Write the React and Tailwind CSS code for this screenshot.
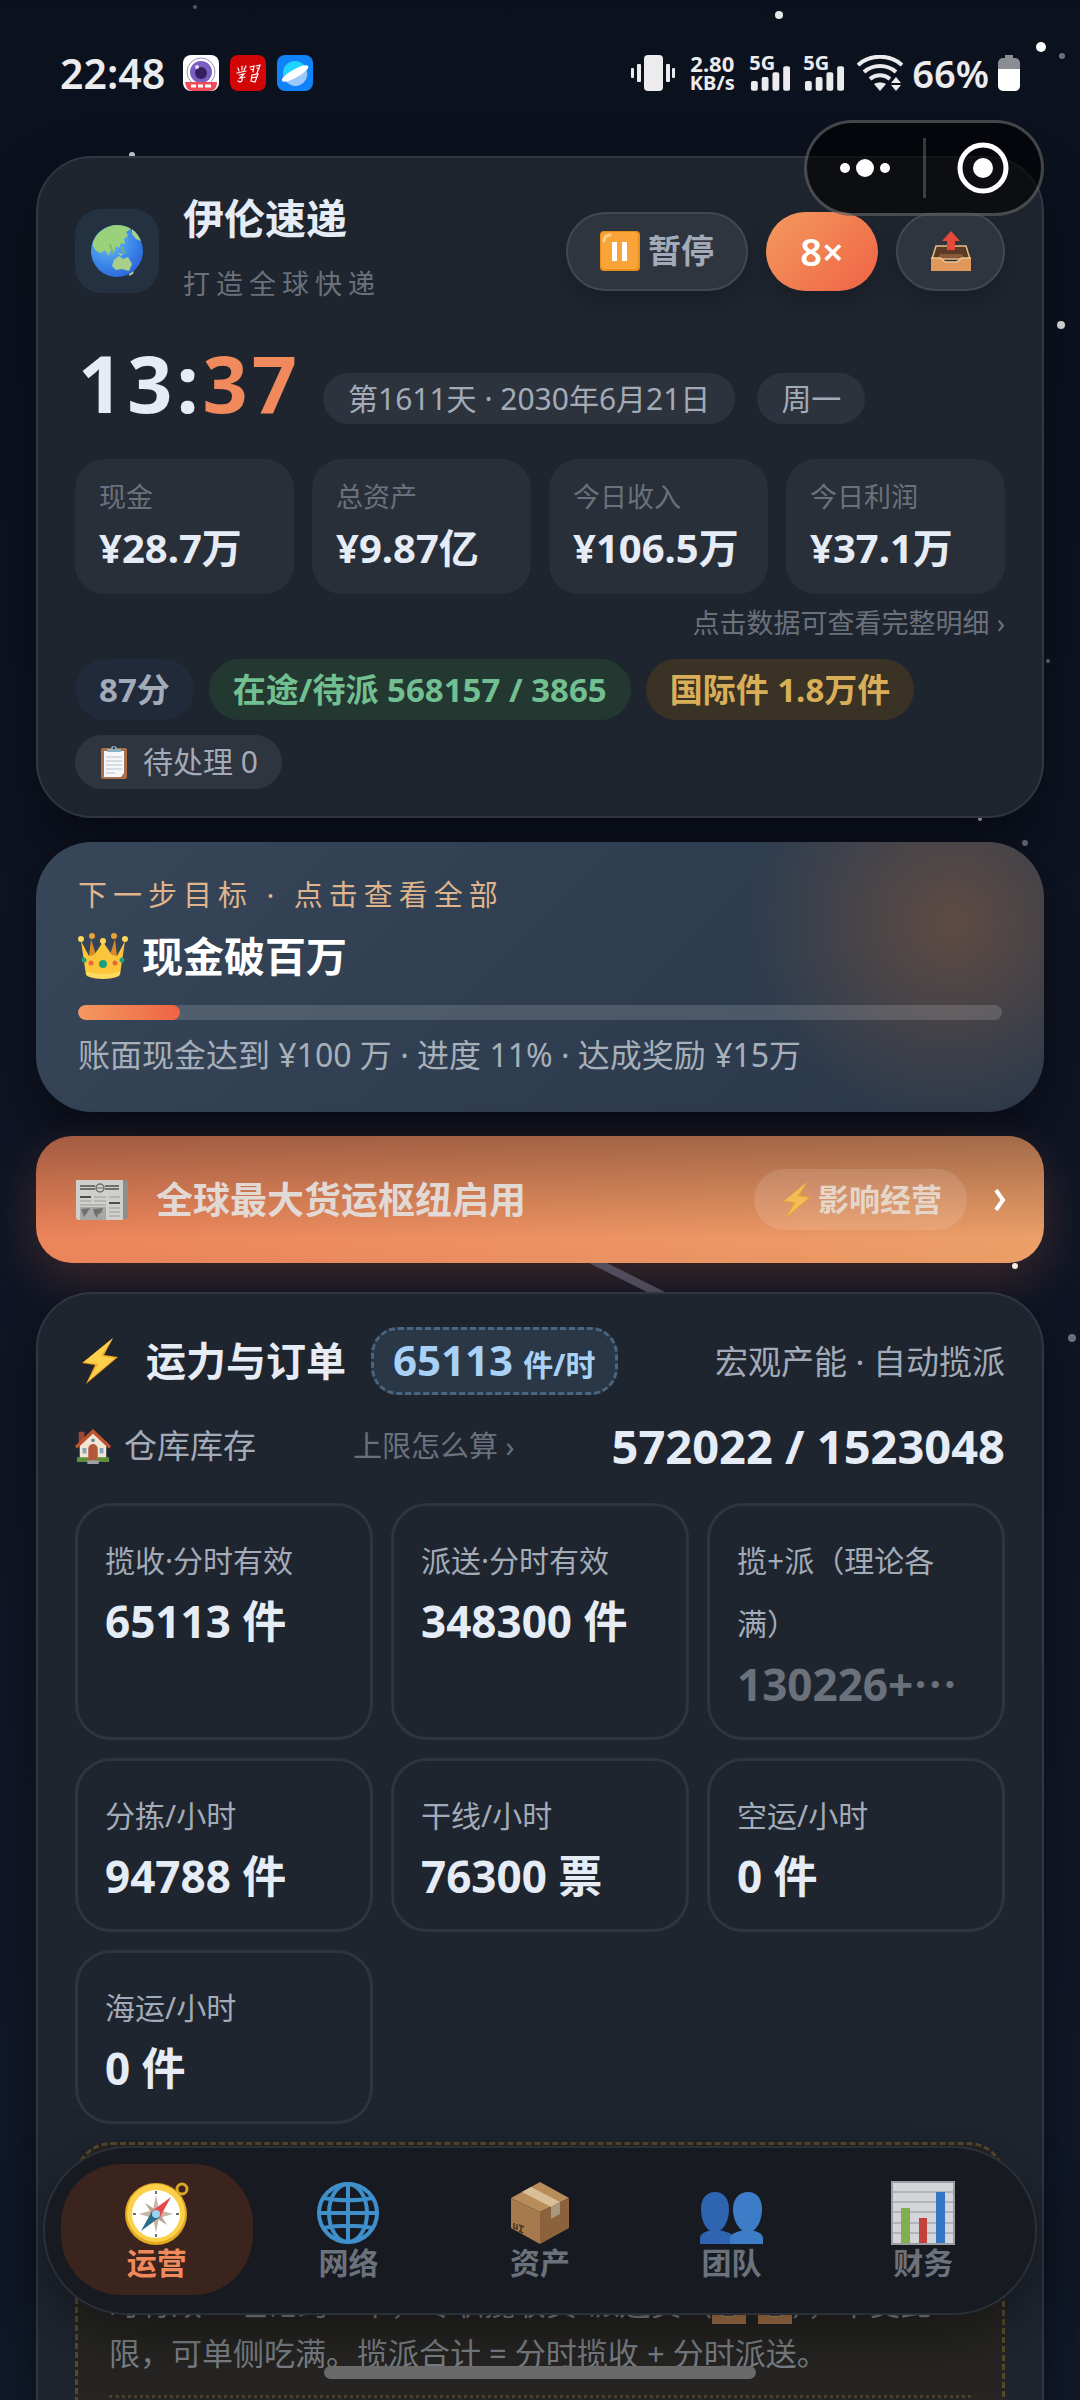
import { useState } from 'react';

const STARS = [
  [779, 15, 4, 0.9],
  [1041, 47, 5, 1],
  [1062, 56, 3, 0.4],
  [195, 7, 2, 0.3],
  [132, 155, 3, 0.8],
  [1061, 325, 4, 0.9],
  [1048, 661, 2, 0.4],
  [1025, 843, 3, 0.4],
  [980, 819, 2, 0.8],
  [1015, 1266, 3, 1],
  [1072, 1338, 4, 0.4],
];

const STATS = [
  { label: '现金', value: '¥28.7万' },
  { label: '总资产', value: '¥9.87亿' },
  { label: '今日收入', value: '¥106.5万' },
  { label: '今日利润', value: '¥37.1万' },
];

const CAPACITY = [
  { label: '揽收·分时有效', value: '65113 件' },
  { label: '派送·分时有效', value: '348300 件' },
  { label: '揽+派（理论各满）', value: '130226+⋯', muted: true },
  { label: '分拣/小时', value: '94788 件' },
  { label: '干线/小时', value: '76300 票' },
  { label: '空运/小时', value: '0 件' },
  { label: '海运/小时', value: '0 件' },
];

const EarthIcon = () => (
  <svg viewBox="0 0 54 54" className="size-[54px]">
    <defs>
      <radialGradient id="sea" cx="0.35" cy="0.3" r="0.8">
        <stop offset="0" stopColor="#6fc0f2" />
        <stop offset="0.6" stopColor="#3b86e8" />
        <stop offset="1" stopColor="#2a5fd8" />
      </radialGradient>
    </defs>
    <circle cx="27" cy="27" r="26" fill="url(#sea)" />
    <path
      d="M3 18C7 8 16 2 26 1c6 0 11 1 15 4l-5 3 2 4-4 3 1 5-4-1-2 5-3-2-2 6-4-1-1 5-4-6-4 3-5-2-3-5z"
      fill="#9bd17a"
    />
    <path d="M42 5c4 3 7 7 9 12l-5-2-4-5zM24 36l5-4 4 3 5-2 4 7-3 7-7-2-6 1-4-4zM39 50l5-3-1 3-4 2zM28 29l5 1-2 2z" fill="#a9d08a" />
    <path d="M20 21l3 8M32 24l2 5" stroke="#79b86b" strokeWidth="2" strokeLinecap="round" />
  </svg>
);

const PauseIcon = () => (
  <svg viewBox="0 0 40 40" className="size-10">
    <rect x="0" y="0" width="40" height="40" rx="4" fill="#e58f1d" />
    <rect x="1" y="1" width="37" height="37" rx="4" fill="#f9a338" />
    <path d="M4 10a6 6 0 0 1 6-6" stroke="#ffd08a" strokeWidth="3" fill="none" strokeLinecap="round" />
    <rect x="12" y="11" width="5" height="19" fill="#fff" />
    <rect x="22" y="11" width="5" height="19" fill="#fff" />
  </svg>
);

const TrayIcon = ({ className, down }) => (
  <svg viewBox="0 0 40 40" className={className}>
    <path d="M5 15h30l4 13H1z" fill="#5c3a25" stroke="#e8bd83" strokeWidth="1.5" />
    <path d="M9 23h22l2 4H7z" fill="#8a5a38" />
    <path d="M0 27h9c2 0 3 4 6 4h10c3 0 4-4 6-4h9v13H0z" fill="#e0985c" />
    <path d="M0 27h9c2 0 3 4 6 4h10c3 0 4-4 6-4h9" fill="none" stroke="#f0c48c" strokeWidth="1.5" />
    <path d={down ? 'M16 0h8v9h5l-9 10-9-10h5z' : 'M20 0l9 10h-5v9h-8v-9h-5z'} fill="#e5493a" />
  </svg>
);

const ClipboardIcon = () => (
  <svg viewBox="0 0 30 36" className="h-9 w-[30px]">
    <rect x="2" y="4" width="26" height="31" rx="2" fill="#a9704a" />
    <path d="M5 7h20v22l-3 4H5z" fill="#f5f7fa" />
    <path d="M7 13h16M7 17h16M7 21h16M7 25h16M7 29h9" stroke="#b9c3cf" strokeWidth="1" />
    <path d="M8 8V5h4a3 3 0 0 1 6 0h4v3z" fill="#8fb3c6" />
    <circle cx="15" cy="4" r="1.3" fill="#34424e" />
  </svg>
);

const CrownIcon = () => (
  <svg viewBox="0 0 50 46" className="h-[46px] w-[50px]">
    <path d="M13 6l5 16 7-14 7 14 5-16 3 26H10z" fill="#d98b2b" />
    <path d="M3 8l8 15 5-1 9-13 9 13 5 1 8-15-5 34c-8 4-26 4-34 0z" fill="#fbc63b" />
    <path d="M8 38c9 4 25 4 34 0l-1 5c-8 4-24 4-32 0z" fill="#fdd95c" />
    <g fill="#fdd65a">
      <circle cx="3" cy="6" r="3" />
      <circle cx="47" cy="6" r="3" />
      <circle cx="25" cy="8" r="3" />
      <circle cx="14" cy="3" r="3" fill="#e9a23a" />
      <circle cx="36" cy="3" r="3" fill="#e9a23a" />
    </g>
    <circle cx="25" cy="31" r="4" fill="#1f9e7c" />
    <circle cx="13" cy="30" r="2.5" fill="#e5683a" />
    <circle cx="37" cy="30" r="2.5" fill="#e5683a" />
    <circle cx="6" cy="27" r="2.5" fill="#1f9e7c" />
    <circle cx="44" cy="27" r="2.5" fill="#1f9e7c" />
  </svg>
);

const NewsIcon = () => (
  <svg viewBox="0 0 52 42" className="h-[42px] w-[52px]">
    <rect x="4" y="1" width="48" height="39" rx="3" fill="#8d8d8b" />
    <path d="M0 1h47v40H3c-2 0-3-1-3-3z" fill="#cfcfcc" />
    <path d="M4 7h15M29 7h14M4 10h15M29 10h14" stroke="#6f706f" strokeWidth="2" />
    <circle cx="24" cy="9" r="4" fill="none" stroke="#6f706f" strokeWidth="1.5" />
    <path d="M20 9h8" stroke="#6f706f" />
    <path d="M4 18h11M33 24h11" stroke="#4d4d4c" strokeWidth="2" />
    <path d="M4 22h11M18 18h12M18 22h12M33 18h11M4 26h26M33 29h11M33 33h11M33 37h11" stroke="#9b9b99" />
    <rect x="4" y="28" width="26" height="13" fill="#a7a7a5" />
    <path d="M5 30l9-1-3 5-3 4zM17 30l10-1-2 5-3 1-1 4-3-5z" fill="#6f706f" />
  </svg>
);

const BoltIcon = ({ className }) => (
  <svg viewBox="0 0 36 46" className={className}>
    <path d="M31 0L0 25l13 2L4 46l32-27-14-2z" fill="#f5a623" />
    <path d="M31 0L2 24l14 2L6 43l27-23-14-2z" fill="#fdd14b" />
  </svg>
);

const HouseIcon = () => (
  <svg viewBox="0 0 38 38" className="size-9">
    <rect x="4" y="4" width="6" height="12" fill="#9c4a36" />
    <path d="M5 18L19 5l14 13v15H5z" fill="#f2e6d4" />
    <path d="M19 1L0 19l2 3L19 6l17 16 2-3z" fill="#c0532f" />
    <path d="M2 31h12v5H2zM24 31h12v5H24z" fill="#5e8f3c" />
    <path d="M14 36V22a5 5 0 0 1 10 0v14z" fill="#b5573a" />
    <circle cx="19" cy="13" r="2" fill="#6f8ba0" />
    <path d="M8 21h4v6H8zM26 21h4v6h-4z" fill="#7fa6bd" />
    <path d="M13 34h12v4H13z" fill="#9aa2a8" />
  </svg>
);

const CompassIcon = () => (
  <svg viewBox="0 0 64 64" className="size-16">
    <circle cx="57" cy="8" r="5" fill="none" stroke="#d9a726" strokeWidth="3" />
    <circle cx="31" cy="33" r="31" fill="#e3a91f" />
    <circle cx="31" cy="32" r="29" fill="#fbd04a" />
    <circle cx="31" cy="33" r="24" fill="#fff" />
    <path d="M31 14l3 15 14 4-14 4-3 15-3-15-14-4 14-4z" fill="#c9b5a6" />
    <path d="M20 22l11 7 11-7-7 11 7 11-11-7-11 7 7-11z" fill="#b8a396" />
    <path d="M46 16L27 30l8 6z" fill="#e5484a" />
    <path d="M16 50l11-20 8 6z" fill="#2c6c8a" />
    <circle cx="31" cy="33" r="4" fill="#9bd3ee" />
    <path d="M31 10v3M31 53v3M8 33h3M51 33h3" stroke="#6f6f6f" strokeWidth="2" />
  </svg>
);

const GlobeIcon = () => (
  <svg viewBox="0 0 64 64" className="size-16" fill="none" stroke="#3f8fcb" strokeWidth="4">
    <circle cx="32" cy="32" r="29" />
    <ellipse cx="32" cy="32" rx="19" ry="29" />
    <path d="M32 3v58M3 32h58M8 17c14 3 34 3 48 0M8 47c14-3 34-3 48 0" />
  </svg>
);

const PackageIcon = () => (
  <svg viewBox="0 0 64 64" className="size-16">
    <path d="M32 1l29 16-29 14L3 17z" fill="#b98c5c" />
    <path d="M3 17l29 14v32L3 47z" fill="#a67a4c" />
    <path d="M61 17L32 31v32l29-16z" fill="#8b623b" />
    <path d="M23 6l29 15-9 5L14 11z" fill="#d8bf98" />
    <path d="M43 26l9-5v12l-9 5z" fill="#a8967e" />
    <path d="M6 42v5l3 1v-5M11 50l4 2M13 45v6M11 44l5 2" stroke="#4a3421" strokeWidth="1.5" fill="none" />
  </svg>
);

const TeamIcon = () => (
  <svg viewBox="0 0 64 64" className="size-16">
    <path d="M15 11c9 0 14 7 14 17 0 11-5 23-14 23S1 39 1 28c0-10 5-17 14-17zM0 63v-6c0-5 8-8 15-8s19 3 19 8v6z" fill="#2f64b0" />
    <path d="M48 11c9 0 14 7 14 17 0 11-5 23-14 23S33 39 33 28c0-10 6-17 15-17zM30 63v-6c0-5 11-8 18-8s15 3 15 8v6z" fill="#3d7dc8" />
  </svg>
);

const ChartIcon = () => (
  <svg viewBox="0 0 64 64" className="size-16">
    <rect x="1" y="1" width="62" height="62" fill="#d3d5d8" stroke="#9a9da2" strokeWidth="2" />
    <path d="M2 11h60M2 21h60M2 31h60M2 42h60M2 52h60" stroke="#a6a9ae" strokeWidth="1.5" />
    <rect x="10" y="27" width="9" height="35" fill="#83ae50" />
    <rect x="28" y="37" width="8" height="25" fill="#c4423c" />
    <rect x="45" y="11" width="9" height="51" fill="#3576c4" />
  </svg>
);

const TABS = [
  { name: '运营', Icon: CompassIcon },
  { name: '网络', Icon: GlobeIcon },
  { name: '资产', Icon: PackageIcon },
  { name: '团队', Icon: TeamIcon },
  { name: '财务', Icon: ChartIcon },
];

const Signal = () => (
  <div className="flex h-9 w-[42px] flex-col justify-between">
    <span className="text-[20px] leading-4 font-bold">5G</span>
    <svg viewBox="0 0 43 25" className="-mt-2 h-[25px] w-[42px]" fill="#ececee">
      <rect x="2" y="15" width="7" height="10" rx="2" />
      <rect x="13" y="11" width="7" height="14" rx="2" />
      <rect x="24" y="6" width="7" height="19" rx="2" />
      <rect x="35" y="0" width="7" height="25" rx="2" />
    </svg>
  </div>
);

const StatusBar = () => (
  <header className="flex h-[156px] items-start justify-between px-6 pt-[49px] text-[#ececee]">
    <div className="flex h-12 items-center gap-[11px]">
      <span className="mr-[7px] text-[41px] leading-none font-semibold">22:48</span>
      <svg viewBox="0 0 36 36" className="size-9">
        <rect width="36" height="36" rx="8" fill="#fff" />
        <circle cx="18" cy="17" r="14" fill="none" stroke="#9a92b8" strokeWidth="1" />
        <circle cx="18" cy="17" r="11" fill="#7a5fc0" />
        <circle cx="18" cy="18" r="6" fill="#33205e" />
        <circle cx="14" cy="12" r="2" fill="#e9dcff" />
        <path d="M2 27h32c0 6-3 9-8 9H10c-5 0-7-3-8-9z" fill="#ee4b58" />
        <path d="M8 31h5M15 31h5M22 31h6" stroke="#fff" strokeWidth="3" />
      </svg>
      <svg viewBox="0 0 36 36" className="size-9">
        <rect width="36" height="36" rx="8" fill="#d20606" />
        <g fill="none" stroke="#fff" strokeWidth="1.2" strokeLinecap="round">
          <path d="M8 13l1 3M12 11v4M16 11l-2 4M7 18l9-2M9 20l5-1-4 4 5-1M12 22c1 4-1 6-4 4" />
          <path d="M20 12l4-1-1 6M26 11l4-1-3 8M21 14l2 1M27 13l2 1M22 20l6-1-3 8-4-1zM22 23l4-1" />
        </g>
      </svg>
      <svg viewBox="0 0 36 36" className="size-9">
        <rect width="36" height="36" rx="8" fill="#0f83f7" />
        <circle cx="18" cy="18" r="12" fill="#21d3ff" />
        <path d="M8 25a12 12 0 0 0 22-9z" fill="#9cc8fb" />
        <path d="M5 26c-1-3 4-7 11-11s13-6 15-4-4 7-11 11-13 6-15 4z" fill="#fff" />
      </svg>
    </div>

    <div className="flex h-12 items-center gap-3">
      <svg viewBox="0 0 44 36" className="h-9 w-11" fill="#ececee">
        <rect x="13" y="0" width="19" height="36" rx="4" />
        <rect x="0" y="13" width="3" height="10" rx="1" />
        <rect x="6" y="9" width="4" height="18" rx="1" />
        <rect x="35" y="9" width="4" height="18" rx="1" />
        <rect x="41" y="13" width="3" height="10" rx="1" />
      </svg>
      <div className="flex w-[50px] flex-col items-center text-[22px] leading-5 font-bold">
        <span>2.80</span>
        <span className="text-[20px]">KB/s</span>
      </div>
      <Signal />
      <Signal />
      <div className="flex items-center gap-[9px]">
        <svg viewBox="0 0 46 36" className="h-9 w-[46px]" fill="none" stroke="#ececee" strokeWidth="4">
          <path d="M1 10c12-11 32-11 44 0M7 17c9-8 23-8 32 0M13 24c6-5 14-5 20 0" />
          <path d="M17 29c3-2 9-2 12 0l-6 7z" fill="#ececee" stroke="none" />
          <path d="M39 22l5 6H34zM34 30h10l-5 6z" fill="#ececee" stroke="none" />
        </svg>
        <span className="text-[38px] leading-none font-semibold">66%</span>
        <svg viewBox="0 0 22 36" className="h-9 w-[22px]">
          <path d="M7 0h8v3h2a5 5 0 0 1 5 5v6H0V8a5 5 0 0 1 5-5h2z" fill="#8b8d94" />
          <path d="M0 14h22v17a5 5 0 0 1-5 5H5a5 5 0 0 1-5-5z" fill="#fff" />
        </svg>
      </div>
    </div>
  </header>
);

const Capsule = () => (
  <div className="absolute top-[120px] right-9 flex h-24 w-60 items-center rounded-full border-3 border-white/25 bg-black/60">
    <button aria-label="更多" className="flex flex-1 justify-center">
      <svg viewBox="0 0 50 18" className="h-[18px] w-[50px]" fill="#fff">
        <circle cx="5" cy="9" r="5" />
        <circle cx="25" cy="9" r="9" />
        <circle cx="45" cy="9" r="5" />
      </svg>
    </button>
    <span className="h-[60px] w-[3px] bg-white/20" />
    <button aria-label="关闭" className="flex flex-1 justify-center">
      <svg viewBox="0 0 52 52" className="size-[52px]">
        <circle cx="26" cy="26" r="23" fill="none" stroke="#fff" strokeWidth="5" />
        <circle cx="26" cy="26" r="10" fill="#fff" />
      </svg>
    </button>
  </div>
);

const Overview = () => (
  <section className="rounded-[56px] border-2 border-[#313640] bg-[#1f252f] px-[37px] pt-[27px] pb-[27px] shadow-[0_24px_60px_rgba(0,0,0,0.45)]">
    <div className="flex items-center justify-between">
      <div className="flex items-center gap-6">
        <div className="flex size-[84px] items-center justify-center rounded-[26px] bg-[#243141]">
          <EarthIcon />
        </div>
        <div>
          <h1 className="text-[41px] leading-[66px] font-bold text-[#e6ecf5]">伊伦速递</h1>
          <p className="text-[27px] leading-[66px] tracking-[6px] text-[#6b717b]">打造全球快递</p>
        </div>
      </div>
      <div className="flex gap-[18px]">
        <button className="flex h-[79px] items-center gap-2 rounded-full border-2 border-[#424852] bg-[#2f353f] px-8 text-[33px] font-bold text-[#a3abb8] shadow-[0_12px_24px_rgba(0,0,0,0.2)]">
          <PauseIcon />
          暂停
        </button>
        <button className="h-[79px] w-28 rounded-full bg-linear-135 from-[#f3995f] to-[#ee6244] text-[38px] font-semibold text-white shadow-[0_12px_24px_rgba(0,0,0,0.2)]">
          8×
        </button>
        <button
          aria-label="导出"
          className="flex h-[79px] w-[109px] items-center justify-center rounded-full border-2 border-[#424852] bg-[#2f353f] shadow-[0_12px_24px_rgba(0,0,0,0.2)]"
        >
          <TrayIcon className="size-10" />
        </button>
      </div>
    </div>

    <div className="mt-6 flex items-end gap-[22px]">
      <p className="ml-[3px] text-[79px] leading-[83px] font-bold tracking-[4px] text-[#e6ecf5]">
        13:<span className="text-[#f08a5d]">37</span>
      </p>
      <span className="rounded-full bg-[#2d333d] px-[25px] text-[30px] leading-[51px] text-[#a3abb8]">
        第1611天 · 2030年6月21日
      </span>
      <span className="rounded-full bg-[#2d333d] px-6 text-[30px] leading-[51px] text-[#a3abb8]">周一</span>
    </div>

    <div className="mt-[35px] grid grid-cols-4 gap-[18px]">
      {STATS.map((stat) => (
        <div key={stat.label} className="h-[135px] rounded-[30px] bg-[#292f39] px-6 pt-[14px]">
          <p className="text-[27px] leading-[48px] text-[#6b717b]">{stat.label}</p>
          <p className="text-[40px] leading-[54px] font-bold whitespace-nowrap text-[#e6ecf5]">{stat.value}</p>
        </div>
      ))}
    </div>

    <p className="text-right text-[27px] leading-[58px] text-[#6b717b]">点击数据可查看完整明细 ›</p>

    <div className="mt-[7px] flex flex-wrap gap-[15px]">
      <span className="rounded-full bg-[#212a3a] px-6 text-[33px] leading-[61px] font-bold text-[#a3abb8]">87分</span>
      <span className="rounded-full bg-[#233831] px-6 text-[33px] leading-[61px] font-bold text-[#72bf92]">
        在途/待派 568157 / 3865
      </span>
      <span className="rounded-full bg-[#3a3224] px-6 text-[33px] leading-[61px] font-bold text-[#d9ae58]">
        国际件 1.8万件
      </span>
      <span className="flex items-center gap-[14px] rounded-full bg-[#2f353f] px-6 text-[30px] leading-[54px] text-[#a3abb8]">
        <ClipboardIcon />
        待处理 0
      </span>
    </div>
  </section>
);

const Goal = ({ progress }) => (
  <section className="rounded-[56px] bg-[radial-gradient(circle_at_91%_30%,rgba(200,110,50,0.32),transparent_22%),linear-gradient(135deg,#374659,#2f3e50_50%,#2a384a)] px-[42px] pt-[27px] pb-[29px] shadow-[0_24px_60px_rgba(0,0,0,0.45)]">
    <p className="text-[29px] leading-[52px] tracking-[6px] text-[#dfb48c]">下一步目标 · 点击查看全部</p>
    <h2 className="flex items-center gap-[14px] text-[41px] leading-[70px] font-bold text-white">
      <CrownIcon />
      现金破百万
    </h2>
    <div className="mt-[14px] h-[15px] overflow-hidden rounded-full bg-white/15">
      <div className="h-full rounded-full bg-linear-to-r from-[#f3995f] to-[#ee6244]" style={{ width: `${progress}%` }} />
    </div>
    <p className="mt-[6px] text-[32px] leading-[57px] text-[#a7afba]">
      账面现金达到 ¥100 万 · 进度 {progress}% · 达成奖励 ¥15万
    </p>
  </section>
);

const News = () => (
  <section className="flex h-[127px] items-center rounded-[36px] bg-[linear-gradient(180deg,rgba(60,35,30,0.42),transparent_80%),linear-gradient(100deg,#ec845a,#ec9f68)] px-10 shadow-[0_18px_48px_rgba(240,120,70,0.2)]">
    <NewsIcon />
    <h2 className="ml-7 flex-1 text-[37px] font-bold text-[#e2d8d4]">全球最大货运枢纽启用</h2>
    <span className="flex h-[61px] items-center rounded-full bg-white/12 pr-[25px] pl-[29px] text-[31px] font-bold text-[#e6d6c8]">
      <BoltIcon className="mr-[7px] h-9 w-7 opacity-70" />
      影响经营
    </span>
    <svg viewBox="0 0 12 22" className="mr-[-2px] ml-[27px] h-[22px] w-3">
      <path d="M2 1l7 10-7 10" fill="none" stroke="#fff" strokeWidth="4" />
    </svg>
  </section>
);

const Capacity = () => (
  <section className="rounded-t-[56px] border-2 border-b-0 border-[#313640] bg-[#1f252f] px-[37px] pt-[33px] shadow-[0_24px_60px_rgba(0,0,0,0.45)]">
    <div className="flex h-[68px] items-center">
      <BoltIcon className="ml-[7px] h-[46px] w-9" />
      <h2 className="ml-7 text-[40px] leading-none font-bold text-[#e6ecf5]">运力与订单</h2>
      <button className="ml-[25px] flex h-[68px] items-baseline gap-[10px] rounded-[27px] border-3 border-dashed border-[#4a6580] bg-[#293747] px-[19px] text-[42px] leading-[60px] font-bold text-[#a9d0f5]">
        65113 <span className="text-[30px] leading-none">件/时</span>
      </button>
      <span className="ml-auto text-[33px] leading-none text-[#a3abb8]">宏观产能 · 自动揽派</span>
    </div>

    <div className="mt-[18px] flex h-[66px] items-center justify-between">
      <p className="flex items-center gap-[13px] text-[33px] text-[#a3abb8]">
        <HouseIcon />
        仓库库存
      </p>
      <a href="#limit" className="text-[29px] text-[#6b717b]">
        上限怎么算 ›
      </a>
      <p className="text-[47px] leading-none font-bold text-[#e6ecf5]">572022 / 1523048</p>
    </div>

    <div className="mt-6 grid grid-cols-3 gap-[18px]">
      {CAPACITY.map((item) => (
        <div key={item.label} className="rounded-[36px] border-3 border-[#2f353e] px-[27px] pt-[23px] pb-[23px]">
          <p className="text-[30px] leading-[63px] text-[#a3abb8]">{item.label}</p>
          <p
            className={`text-[44px] leading-[59px] font-bold whitespace-nowrap ${
              item.muted ? 'text-[#6b717b]' : 'text-[#e6ecf5]'
            }`}
          >
            {item.value}
          </p>
        </div>
      ))}
    </div>

    <div className="mt-[18px] rounded-t-[36px] border-3 border-b-0 border-dashed border-[#57492c] bg-[#262523] px-[31px] pt-[133px] pb-20">
      <p className="text-[31px] leading-[50px] text-[#7d8288]">
        时有效 = 理论约一半，专职揽收员/派送员（
        <TrayIcon className="inline size-[34px] opacity-70" down />/<TrayIcon className="inline size-[34px] opacity-70" />
        ），不受此限，可单侧吃满。揽派合计 = 分时揽收 + 分时派送。
      </p>
      <hr className="mt-[17px] border-t-3 border-dotted border-[#4a402c]" />
    </div>
  </section>
);

const App = () => {
  const [tab, setTab] = useState('运营');

  return (
    <div className="relative h-screen overflow-hidden bg-linear-to-b from-[#0c111e] via-[#0f1524] to-[#121a2b] font-['Noto_Sans','Noto_Sans_CJK_SC',sans-serif]">
      <svg className="absolute inset-0 size-full">
        {STARS.map(([x, y, r, opacity]) => (
          <circle key={`${x}-${y}`} cx={x} cy={y} r={r} fill="#fff" opacity={opacity} />
        ))}
      </svg>

      <div className="relative h-full overflow-y-auto px-9 [scrollbar-width:none]">
        <StatusBar />
        <main className="flex flex-col gap-6">
          <Overview />
          <Goal progress={11} />
          <div className="relative">
            <News />
            <svg viewBox="0 0 80 30" className="absolute top-full left-[554px] h-[30px] w-20">
              <path d="M0 -4L76 34" stroke="#54505f" strokeWidth="8" />
            </svg>
          </div>
          <div className="relative mt-[5px]">
            <Capacity />
          </div>
        </main>
      </div>

      <Capsule />

      <nav className="absolute inset-x-[43px] bottom-[85px] flex rounded-[84px] border-2 border-[#2a3038] bg-[#171b21] px-4 pt-4 pb-[18px] shadow-[0_18px_60px_rgba(0,0,0,0.4)]">
        {TABS.map(({ name, Icon }) => (
          <button
            key={name}
            onClick={() => setTab(name)}
            className={`flex h-[131px] flex-1 flex-col items-center rounded-[60px] pt-[17px] text-[30px] leading-9 font-bold ${
              tab === name ? 'bg-[#3b241d] text-[#f08a5d]' : 'text-[#6b727c]'
            }`}
          >
            <Icon />
            {name}
          </button>
        ))}
      </nav>
      <div className="absolute bottom-[21px] left-1/2 h-[13px] w-[432px] -translate-x-1/2 rounded-full bg-[#6a6a6a]" />
    </div>
  );
};

export default App;
